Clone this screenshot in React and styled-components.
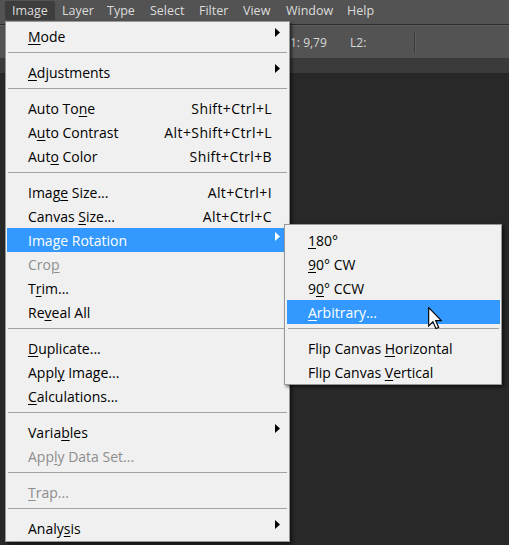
import React from 'react';
import styled, { createGlobalStyle } from 'styled-components';

const GlobalStyle = createGlobalStyle`
  html, body {
    margin: 0;
    padding: 0;
    background: #282828;
  }
  body {
    width: 509px;
    height: 545px;
    overflow: hidden;
  }
`;

const Workspace = styled.div`
  position: relative;
  display: flex;
  flex-direction: column;
  width: 509px;
  height: 545px;
  overflow: hidden;
  background: #282828;
  font-family: "Open Sans", "Liberation Sans", sans-serif;
`;

const MenuBar = styled.div`
  display: flex;
  align-items: flex-start;
  height: 25px;
  box-sizing: border-box;
  padding: 1px 0 0 5px;
  background: #535353;
  border-bottom: 1px solid #2d2d2d;
`;

const MenuTitle = styled.div`
  width: ${p => p.w}px;
  height: 19px;
  box-sizing: border-box;
  padding-left: 7px;
  line-height: 19px;
  font-size: 12.5px;
  color: #dcdcdc;
  border-radius: 2px 2px 0 0;
  background: ${p => (p.open ? '#3d3d3d' : 'transparent')};
`;

const OptionsBar = styled.div`
  display: flex;
  align-items: center;
  height: 34px;
  box-sizing: border-box;
  padding-left: 290px;
  background: #535353;
  border-top: 1px solid #5f5f5f;
  border-bottom: 1px solid #3a3a3a;
`;

const Readout = styled.div`
  width: ${p => p.w}px;
  font-size: 12px;
  color: #d8d8d8;
  white-space: nowrap;
`;

const Divider = styled.div`
  width: 1px;
  height: 22px;
  background: #3a3a3a;
  border-right: 1px solid #5e5e5e;
`;

const TabStrip = styled.div`
  height: 14px;
  background: #3b3b3b;
`;

const Canvas = styled.div`
  flex: 1;
  background: #282828;
`;

const Dropdown = styled.div`
  position: absolute;
  left: 5px;
  top: 21px;
  width: 285px;
  box-sizing: border-box;
  padding: 2px 1px 1px 1px;
  background: #f0f0f0;
  border: 1px solid #979797;
  box-shadow: 2px 2px 3px rgba(0, 0, 0, 0.55);
  z-index: 2;
`;

const Flyout = styled(Dropdown)`
  left: 277px;
  top: -4px;
  width: 218px;
  padding: 3px 1px 0 2px;
  z-index: 3;
`;

const Row = styled.div`
  position: relative;
  display: grid;
  grid-template-columns: 1fr auto 16px;
  align-items: center;
  height: 24px;
  padding-left: 21px;
  font-size: 14px;
  white-space: nowrap;
  color: ${p => (p.active ? '#ffffff' : p.disabled ? '#8d8d8d' : '#000000')};
  background: ${p => (p.active ? '#3399ff' : 'transparent')};

  u {
    text-underline-offset: 2px;
    text-decoration-thickness: 1px;
  }
`;

const Shortcut = styled.span`
  text-align: right;
  letter-spacing: 0.4px;
`;

const Arrow = styled.svg`
  margin-left: 3px;
  transform: translateY(-4px);
`;

const Separator = styled.div`
  height: 12px;
  margin: 0 1px;
  box-sizing: border-box;
  padding-top: 4px;

  &::after {
    content: '';
    display: block;
    height: 1px;
    background: #a2a2a2;
  }
`;

const Pointer = styled.svg`
  position: absolute;
  left: 428px;
  top: 307px;
  z-index: 4;
`;

const titles = [
  { label: 'Image', w: 50, open: true },
  { label: 'Layer', w: 45 },
  { label: 'Type', w: 43 },
  { label: 'Select', w: 49 },
  { label: 'Filter', w: 44 },
  { label: 'View', w: 43 },
  { label: 'Window', w: 61 },
  { label: 'Help', w: 40 },
];

// label, index of the mnemonic letter, shortcut, flags
const imageMenu = [
  { label: 'Mode', key: 0, sub: true },
  '-',
  { label: 'Adjustments', key: 0, sub: true },
  '-',
  { label: 'Auto Tone', key: 7, shortcut: 'Shift+Ctrl+L' },
  { label: 'Auto Contrast', key: 1, shortcut: 'Alt+Shift+Ctrl+L' },
  { label: 'Auto Color', key: 3, shortcut: 'Shift+Ctrl+B' },
  '-',
  { label: 'Image Size...', key: 4, shortcut: 'Alt+Ctrl+I' },
  { label: 'Canvas Size...', key: 7, shortcut: 'Alt+Ctrl+C' },
  { label: 'Image Rotation', key: 3, sub: true, active: true },
  { label: 'Crop', key: 3, disabled: true },
  { label: 'Trim...', key: 1 },
  { label: 'Reveal All', key: 2 },
  '-',
  { label: 'Duplicate...', key: 0 },
  { label: 'Apply Image...', key: 4 },
  { label: 'Calculations...', key: 0 },
  '-',
  { label: 'Variables', key: 5, sub: true },
  { label: 'Apply Data Set...', key: 3, disabled: true },
  '-',
  { label: 'Trap...', key: 0, disabled: true },
  '-',
  { label: 'Analysis', key: 5, sub: true },
];

const rotationMenu = [
  { label: '180°', key: 0 },
  { label: '90° CW', key: 0 },
  { label: '90° CCW', key: 1 },
  { label: 'Arbitrary...', key: 0, active: true },
  '-',
  { label: 'Flip Canvas Horizontal', key: 12 },
  { label: 'Flip Canvas Vertical', key: 12 },
];

const Mnemonic = ({ text, at }) => (
  <span>
    {text.slice(0, at)}
    <u>{text[at]}</u>
    {text.slice(at + 1)}
  </span>
);

const SubArrow = ({ color }) => (
  <Arrow width="5" height="9" viewBox="0 0 5 9">
    <polygon points="0,0 5,4.5 0,9" fill={color} />
  </Arrow>
);

const MenuItems = ({ items, children }) =>
  items.map((item, i) =>
    item === '-' ? (
      <Separator key={i} />
    ) : (
      <Row key={i} active={item.active} disabled={item.disabled}>
        <Mnemonic text={item.label} at={item.key} />
        <Shortcut>{item.shortcut}</Shortcut>
        {item.sub ? <SubArrow color={item.active ? '#ffffff' : '#000000'} /> : <span />}
        {item.active && children}
      </Row>
    )
  );

export default function App() {
  return (
    <Workspace>
      <GlobalStyle />
      <MenuBar>
        {titles.map(t => (
          <MenuTitle key={t.label} w={t.w} open={t.open}>
            {t.label}
          </MenuTitle>
        ))}
      </MenuBar>
      <OptionsBar>
        <Readout w={60}>1: 9,79</Readout>
        <Readout w={64}>L2:</Readout>
        <Divider />
      </OptionsBar>
      <TabStrip />
      <Canvas />

      <Dropdown>
        <MenuItems items={imageMenu}>
          <Flyout>
            <MenuItems items={rotationMenu} />
          </Flyout>
        </MenuItems>
      </Dropdown>

      <Pointer width="14" height="23" viewBox="0 0 12 20">
        <path
          d="M0.5 0.5 L0.5 16.5 L4.2 12.8 L6.8 18.8 L9.2 17.8 L6.6 11.8 L11.5 11.8 Z"
          fill="#ffffff"
          stroke="#000000"
          strokeWidth="1"
          strokeLinejoin="miter"
        />
      </Pointer>
    </Workspace>
  );
}
